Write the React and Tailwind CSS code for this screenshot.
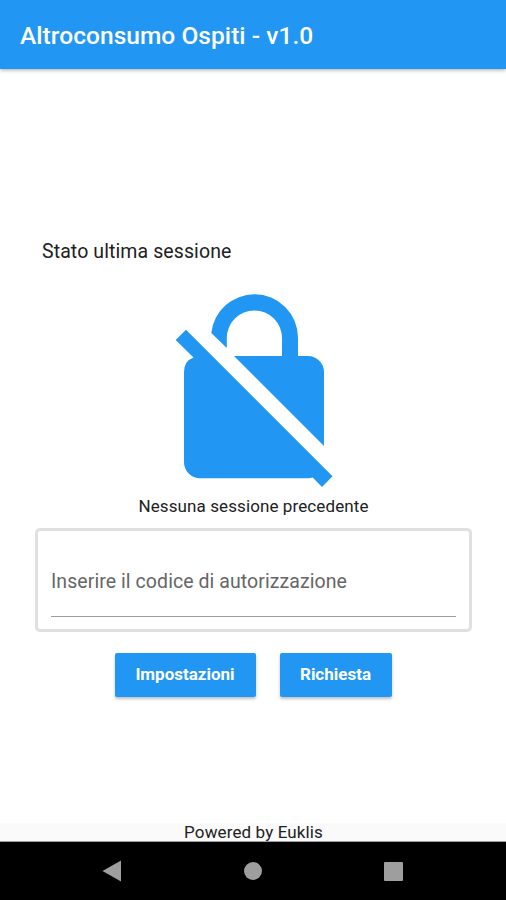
import React from "react";

function NoEncryptionIcon() {
  return (
    <svg width="158" height="194" viewBox="175 294 158 194" fill="#2196f3">
      {/* shackle */}
      <path d="M211.3 333A43.4 43.4 0 0 1 254.5 294.3A43.4 43.4 0 0 1 298 337.5V356H282V338A27.6 27.6 0 0 0 226.8 338V348Z" />
      {/* right part of the body */}
      <path d="M234 356H308A16 16 0 0 1 324 372V446Z" />
      {/* left part with the slash */}
      <path d="M186 329.7L332.5 476.2L322 487L312.7 477.6Q310.5 478.3 308 478.3H200A16 16 0 0 1 184 462.3V372Q184 361 193.5 357.5L175.7 340Z" />
    </svg>
  );
}

function RaisedButton({ children, className }) {
  return (
    <button
      className={`h-11 rounded-[2px] bg-[#2196f3] pr-px text-[17px] font-bold text-white shadow-[0_2px_3px_rgba(0,0,0,0.25)] ${className}`}
    >
      {children}
    </button>
  );
}

export default function App() {
  return (
    <div className="flex h-[900px] w-[506px] flex-col overflow-hidden bg-white font-[Roboto,sans-serif] text-[#212121]">
      {/* APP BAR */}
      <header className="z-10 flex h-[69px] shrink-0 items-center bg-[#2196f3] pt-[3px] pl-[20px] shadow-[0_1px_4px_rgba(0,0,0,0.35)]">
        <h1 className="whitespace-nowrap text-[24.5px] font-medium tracking-[0.05px] text-white">
          Altroconsumo Ospiti - v1.0
        </h1>
      </header>

      {/* CONTENT */}
      <main className="flex h-[754px] shrink-0 flex-col items-center pt-[169px] pl-px">
        <p className="h-7 self-start pl-[41px] text-[19.5px] leading-7 tracking-[0.1px]">
          Stato ultima sessione
        </p>
        <div className="mt-[28px] h-[194px] pl-px">
          <NoEncryptionIcon />
        </div>
        <p className="mt-[6px] h-6 text-[17px] leading-6 tracking-[0.1px]">
          Nessuna sessione precedente
        </p>
        <div className="mt-[10px] h-[104px] w-[437px] rounded-[5px] border-[3px] border-[#e0e0e0] px-[13px] pt-[35px]">
          <div className="h-[51px] border-b border-[#9e9e9e] pt-px text-[19.5px] leading-[29px] tracking-[0.07px] text-[#666666]">
            Inserire il codice di autorizzazione
          </div>
        </div>
        <div className="mt-[21px] flex gap-6">
          <RaisedButton className="w-[141px]">Impostazioni</RaisedButton>
          <RaisedButton className="w-[112px]">Richiesta</RaisedButton>
        </div>
      </main>

      <footer className="h-[19px] shrink-0 border-b border-[#9e9e9e] bg-[#fafafa] pl-px text-center text-[17px] leading-[18px] tracking-[0.12px]">
        Powered by Euklis
      </footer>

      {/* SYSTEM NAVIGATION */}
      <nav className="flex h-[58px] shrink-0 items-center justify-between bg-black pr-[103px] pl-[102px]">
        <svg width="20" height="22" viewBox="0 0 20 22" fill="#9e9e9e">
          <path d="M0.5 11L19 0.5V21.5Z" />
        </svg>
        <div className="size-[18px] rounded-full bg-[#9e9e9e]" />
        <div className="size-[19px] rounded-[1px] bg-[#9e9e9e]" />
      </nav>
    </div>
  );
}
